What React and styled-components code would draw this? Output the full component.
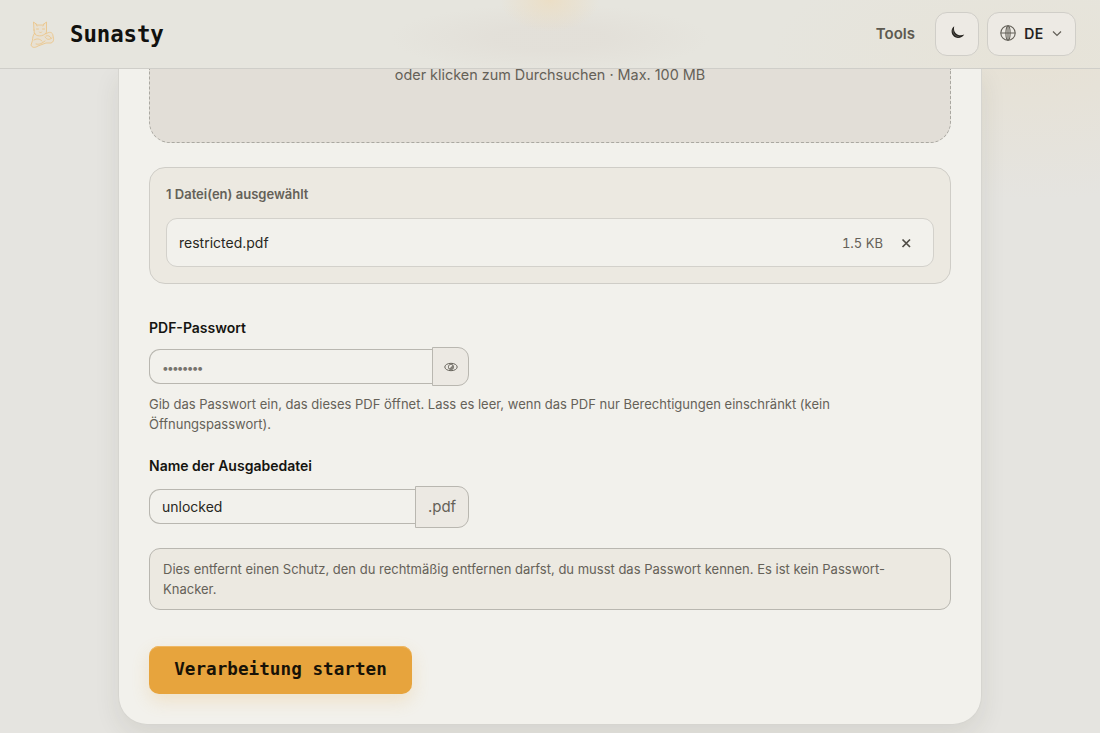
import React, { useState } from "react";
import styled, { createGlobalStyle } from "styled-components";

const GlobalStyle = createGlobalStyle`
  * {
    box-sizing: border-box;
  }
  body {
    margin: 0;
    overflow: hidden;
    background: #e5e4df;
    color: #282722;
    font-family: Inter, "Liberation Sans", sans-serif;
  }
  button, input {
    font-family: inherit;
    outline: none;
  }
`;

const Page = styled.div`
  display: flex;
  flex-direction: column;
  height: 733px;
  overflow: hidden;
  background:
    radial-gradient(ellipse 290px 150px at 1030px 50px, rgba(231, 224, 208, 0.75), rgba(229, 228, 223, 0)),
    #e5e4e0;
`;
const Header = styled.header`
  display: flex;
  flex: none;
  align-items: center;
  justify-content: space-between;
  height: 69px;
  padding: 0 24px 1px 26px;
  border-bottom: 1px solid #cfcec9;
  z-index: 1;
  background:
    radial-gradient(ellipse 50px 32px at 550px 0, rgba(237, 220, 190, 0.75), rgba(237, 220, 190, 0)),
    radial-gradient(ellipse 160px 34px at 550px 38px, rgba(225, 221, 214, 0.65) 35%, rgba(225, 221, 214, 0)),
    radial-gradient(ellipse 260px 110px at 1030px 55px, rgba(231, 225, 210, 0.5), rgba(231, 225, 210, 0)),
    #e6e5de;
`;
const Brand = styled.div`
  display: flex;
  align-items: center;
  gap: 14px;
  color: #11110e;
  font: 700 22.4px/30px "DejaVu Sans Mono", monospace;
  letter-spacing: -0.1px;
`;
const Nav = styled.nav`
  display: flex;
  align-items: center;
  gap: 8px;
`;
const NavLink = styled.span`
  margin-right: 12px;
  color: #5d5a50;
  font-size: 15px;
  font-weight: 600;
`;
const NavButton = styled.button`
  display: flex;
  align-items: center;
  justify-content: center;
  gap: 8px;
  width: ${(props) => props.$width};
  height: 44px;
  padding: 0 1px 1px 0;
  border: 1px solid #d0cec8;
  border-radius: 12px;
  background: #edeae4;
  color: #25231f;
  font-size: 14px;
  font-weight: 600;
  letter-spacing: 0.4px;
`;
const Main = styled.main`
  flex: 1;
  min-height: 0;
`;
const Card = styled.section`
  width: 864px;
  height: 656px;
  margin: 0 auto;
  padding: 0 30px;
  border: 1px solid #d6d5d0;
  border-top: 0;
  border-radius: 0 0 29px 29px;
  background: #f2f1ec;
  box-shadow: 0 10px 26px rgba(55, 51, 35, 0.09);
`;
const DropZone = styled.div`
  height: 74px;
  border: 1px dashed #aaa8a1;
  border-top: 0;
  border-radius: 0 0 21px 21px;
  background: #e2ded7;
  color: #656158;
  font-size: 14.4px;
  line-height: 12px;
  text-align: center;
`;
const FilePanel = styled.div`
  height: 117px;
  margin-top: 24px;
  padding: 16px;
  border: 1px solid #cfcdc7;
  border-radius: 16px;
  background: #ece9e1;
`;
const FileCount = styled.div`
  height: 34px;
  color: #646158;
  font-size: 13px;
  font-weight: 600;
  line-height: 21px;
`;
const FileRow = styled.div`
  display: flex;
  align-items: center;
  height: 49px;
  padding: 0 12px;
  border: 1px solid #d3d1cb;
  border-radius: 11px;
  background: #f2f1ec;
  font-size: 14px;
`;
const FileSize = styled.span`
  margin-left: auto;
  color: #656158;
  font-size: 13px;
  font-variant-numeric: tabular-nums;
`;
const RemoveButton = styled.button`
  display: flex;
  justify-content: center;
  width: 30px;
  margin-left: 8px;
  padding: 0;
  border: 0;
  background: none;
  color: #4f4c45;
`;
const Field = styled.div`
  margin-top: ${(props) => props.$gap};
`;
const Label = styled.label`
  display: block;
  height: ${(props) => props.$height};
  color: #151410;
  font-size: 14px;
  font-weight: 600;
  line-height: 22px;
`;
const InputGroup = styled.div`
  display: flex;
  align-items: center;
  width: 320px;
  height: ${(props) => props.$height};
`;
const TextInput = styled.input`
  flex: 1;
  min-width: 0;
  height: 35px;
  margin-bottom: 1px;
  padding: 0 12px;
  border: 1px solid #b9b7b0;
  border-right: 0;
  border-radius: 11px 0 0 11px;
  background: #f2f1ec;
  color: #282722;
  font-size: 14px;
  &::placeholder {
    color: #77746e;
    font-size: 12px;
    letter-spacing: -1.8px;
    opacity: 1;
  }
`;
const Addon = styled.span`
  display: flex;
  align-items: center;
  justify-content: center;
  width: ${(props) => props.$width};
  height: 100%;
  padding-bottom: 1px;
  border: 1px solid #b9b7b0;
  border-radius: 0 11px 11px 0;
  background: #ece9e3;
  color: #656158;
  font-size: 15px;
`;
const Help = styled.p`
  margin: 8px 0 0;
  max-width: 700px;
  color: #656158;
  font-size: 13px;
  line-height: 20px;
`;
const Notice = styled.div`
  height: 62px;
  margin-top: 20px;
  padding: 10px 13px;
  border: 1px solid #b9b7b0;
  border-radius: 11px;
  background: #ece9e1;
  color: #656158;
  font-size: 13px;
  line-height: 20px;
`;
const StartButton = styled.button`
  width: 263px;
  height: 48px;
  margin-top: 36px;
  padding: 0 0 2px;
  border: 0;
  border-radius: 10px;
  background: #e7a43d;
  box-shadow: 0 7px 18px rgba(231, 164, 61, 0.2), inset 0 1px 0 #efb865;
  color: #171207;
  font: 700 17.6px "DejaVu Sans Mono", monospace;
  letter-spacing: 0.04px;
  white-space: nowrap;
`;

const CatLogo = () => (
  <svg width="30" height="30" viewBox="0 0 30 30" fill="none" stroke="#ebc68c" strokeWidth="0.9" strokeLinejoin="round" strokeLinecap="round">
    <path d="M8 11 7.500 3l4 3h5l4-3v9c0 4-3 5-6.500 5S8 15 8 11Z" fill="#e8e1d3" />
    <path d="M8 15c-2 3-1 6-2 8l-1 3c1 3 4 3 7 1l8-3h5c3-1 3-4 2-7 0-4-4-5-7-2" fill="#e8e1d3" />
    <path d="M8 14c2 4 9 4 12 0M10 5l1 2m7-2-1 2M10.500 10h2m4 0h2m-5 3 1 1 1-1M8 21c3-2 6-1 8 1m4-5c2-1 4 0 5 2m-15 6c4 1 6-1 9-3m0-4c2 3 4 3 7 1" />
  </svg>
);
const MoonIcon = () => (
  <svg width="16" height="16" viewBox="-2 0 16 15" fill="currentColor">
    <path d="M3.200.800C1.200 2 .2 4.500.700 7.100c.6 3.200 3.300 5.400 6.300 5.400 2.700 0 5-1.200 6.200-3.400C8.300 11.400 1.600 8.300 3.200.8Z" />
    <path d="M2 4c-.4 3.800 2.200 6.700 5.800 7.200" stroke="#918d85" strokeWidth="0.500" fill="none" />
  </svg>
);
const GlobeIcon = () => (
  <svg width="16" height="16" viewBox="0 0 16 16" fill="none" stroke="#625f57" strokeWidth="1.100">
    <circle cx="8" cy="8" r="7.200" />
    <path d="M.8 8h14.400M8 .8v14.400" />
    <ellipse cx="8" cy="8" rx="2.100" ry="7.200" />
  </svg>
);
const ChevronIcon = () => (
  <svg width="10" height="7" viewBox="0 0 10 7" fill="none" stroke="#625f57" strokeWidth="1.200">
    <path d="m1 1.500 4 4 4-4" />
  </svg>
);
const CloseIcon = () => (
  <svg width="10" height="10" viewBox="0 0 10 10" stroke="currentColor" strokeWidth="1.700">
    <path d="m1.500 1.500 7.500 7.500m0-7.500L1.500 9" />
  </svg>
);
const EyeIcon = () => (
  <svg width="14" height="12" viewBox="0 -2 14 12" fill="none" stroke="#66635b">
    <ellipse cx="7" cy="5" rx="6.200" ry="3.700" />
    <circle cx="7" cy="5" r="2.700" strokeWidth="0.800" />
    <path d="M5.500 6.500h3v-3l-1.200 2Z" fill="#66635b" strokeWidth="0.500" />
  </svg>
);

function App() {
  const [password, setPassword] = useState("");
  const [name, setName] = useState("unlocked");
  const [files, setFiles] = useState([{ name: "restricted.pdf", size: "1.5 KB" }]);

  return (
    <Page>
      <GlobalStyle />
      <Header>
        <Brand>
          <CatLogo />
          Sunasty
        </Brand>
        <Nav>
          <NavLink>Tools</NavLink>
          <NavButton $width="44px">
            <MoonIcon />
          </NavButton>
          <NavButton $width="89px">
            <GlobeIcon />
            DE
            <ChevronIcon />
          </NavButton>
        </Nav>
      </Header>
      <Main>
        <Card>
          <DropZone>oder klicken zum Durchsuchen · Max. 100 MB</DropZone>
          <FilePanel>
            <FileCount>{files.length} Datei(en) ausgewählt</FileCount>
            {files.map((file) => (
              <FileRow key={file.name}>
                {file.name}
                <FileSize>{file.size}</FileSize>
                <RemoveButton onClick={() => setFiles([])}>
                  <CloseIcon />
                </RemoveButton>
              </FileRow>
            ))}
          </FilePanel>
          <Field $gap="33px">
            <Label $height="30px">PDF-Passwort</Label>
            <InputGroup $height="39px">
              <TextInput
                type="password"
                placeholder="••••••••"
                value={password}
                onChange={(e) => setPassword(e.target.value)}
              />
              <Addon $width="37px">
                <EyeIcon />
              </Addon>
            </InputGroup>
            <Help>
              Gib das Passwort ein, das dieses PDF öffnet. Lass es leer, wenn das PDF nur Berechtigungen einschränkt (kein
              Öffnungspasswort).
            </Help>
          </Field>
          <Field $gap="21px">
            <Label $height="31px">Name der Ausgabedatei</Label>
            <InputGroup $height="42px">
              <TextInput value={name} onChange={(e) => setName(e.target.value)} />
              <Addon $width="54px">.pdf</Addon>
            </InputGroup>
          </Field>
          <Notice>
            Dies entfernt einen Schutz, den du rechtmäßig entfernen darfst, du musst das Passwort kennen. Es ist kein
            Passwort-Knacker.
          </Notice>
          <StartButton>Verarbeitung starten</StartButton>
        </Card>
      </Main>
    </Page>
  );
}

export default App;
